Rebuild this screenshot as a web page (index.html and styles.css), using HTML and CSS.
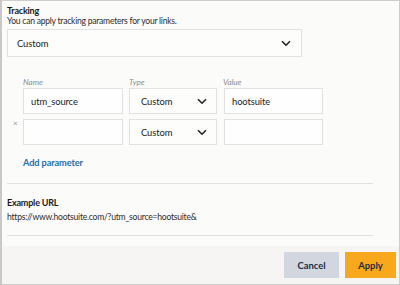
FILE: index.html
```html
<!DOCTYPE html>
<html>

<head>
    <title>Tracking</title>
    <link rel="stylesheet" href="styles.css">
</head>

<body>
    <div class="modal">
        <div class="content">
            <div class="section-title">Tracking</div>
            <div class="section-desc">You can apply tracking parameters for your links.</div>

            <div class="select select-wide">
                <span>Custom</span>
                <svg class="chevron" width="10" height="7" viewBox="0 0 10 7"><path d="M1 1.2 5 5.2l4-4" fill="none" stroke="#222" stroke-width="1.6"/></svg>
            </div>

            <div class="params">
                <div class="param-row param-labels">
                    <div class="remove"></div>
                    <div class="label">Name</div>
                    <div class="label">Type</div>
                    <div class="label">Value</div>
                </div>

                <div class="param-row">
                    <div class="remove"></div>
                    <div class="input">utm_source</div>
                    <div class="select">
                        <span>Custom</span>
                        <svg class="chevron" width="10" height="7" viewBox="0 0 10 7"><path d="M1 1.2 5 5.2l4-4" fill="none" stroke="#222" stroke-width="1.6"/></svg>
                    </div>
                    <div class="input input-value">hootsuite</div>
                </div>

                <div class="param-row">
                    <div class="remove">&times;</div>
                    <div class="input"></div>
                    <div class="select">
                        <span>Custom</span>
                        <svg class="chevron" width="10" height="7" viewBox="0 0 10 7"><path d="M1 1.2 5 5.2l4-4" fill="none" stroke="#222" stroke-width="1.6"/></svg>
                    </div>
                    <div class="input input-value"></div>
                </div>
            </div>

            <div class="add-link">Add parameter</div>

            <hr class="divider">

            <div class="section-title example-title">Example URL</div>
            <div class="example-url">https://www.hootsuite.com/?utm_source=hootsuite&amp;</div>

            <hr class="divider divider-bottom">
        </div>

        <div class="footer">
            <button class="button button-cancel">Cancel</button>
            <button class="button button-apply">Apply</button>
        </div>
    </div>
</body>

</html>
```

FILE: styles.css
```css
body {
    margin: 0;
    font-family: "Lato", "Liberation Sans", sans-serif;
    color: #222;
}

.modal {
    width: 400px;
    height: 285px;
    box-sizing: border-box;
    border: 1px solid #cfcecc;
    border-left: 2px solid #c9c8c6;
    background: #fbfbfa;
    display: flex;
    flex-direction: column;
}

.content {
    padding: 4px 0 0 5px;
    flex: 1;
}

.section-title {
    font-size: 9px;
    line-height: 11px;
    font-weight: bold;
    letter-spacing: -0.2px;
    color: #1a1a1a;
}

.section-desc {
    font-size: 8.6px;
    line-height: 11px;
    letter-spacing: -0.25px;
    color: #2e2e2e;
}

.select {
    display: flex;
    align-items: center;
    justify-content: space-between;
    box-sizing: border-box;
    border: 1px solid #e2e1df;
    background: #fdfdfc;
    font-size: 9.4px;
    letter-spacing: -0.1px;
    padding: 0 9px 0 11px;
}

.select-wide {
    width: 295px;
    height: 28px;
    margin-top: 2px;
    padding-left: 9px;
    padding-right: 10px;
}

.chevron {
    display: block;
}

.params {
    margin-top: 20px;
}

.param-row {
    display: grid;
    grid-template-columns: 10px 100px 88px 100px;
    column-gap: 6px;
    height: 26px;
    margin-top: 5px;
}

.param-labels {
    height: 11px;
    margin-top: 0;
}

.param-labels + .param-row {
    margin-top: 0;
}

.label {
    font-size: 8px;
    line-height: 11px;
    font-style: italic;
    color: #8c8c8a;
}

.input {
    box-sizing: border-box;
    border: 1px solid #e2e1df;
    background: #fefefe;
    font-size: 9.4px;
    letter-spacing: -0.1px;
    display: flex;
    align-items: center;
    padding-left: 7px;
}

.input-value {
    margin-left: 1px;
}

.remove {
    font-size: 8px;
    color: #999;
    padding-left: 6px;
    line-height: 9px;
}

.add-link {
    margin: 12px 0 0 16px;
    font-size: 9.2px;
    line-height: 12px;
    font-weight: bold;
    letter-spacing: -0.1px;
    color: #1f6fa8;
}

.divider {
    width: 366px;
    margin: 14px 0 0 0;
    border: none;
    border-top: 1px solid #e0dfdd;
}

.example-title {
    margin-top: 13px;
}

.example-url {
    margin-top: 3px;
    font-size: 8.6px;
    line-height: 13px;
    letter-spacing: -0.25px;
    color: #2e2e2e;
}

.divider-bottom {
    margin-top: 11px;
}

.footer {
    height: 38px;
    box-sizing: border-box;
    background: #f6f5f3;
    display: flex;
    justify-content: flex-end;
    align-items: center;
    gap: 6px;
    padding: 0 3px 0 0;
}

.button {
    height: 26px;
    border: none;
    font-family: "Lato", "Liberation Sans", sans-serif;
    font-size: 9.4px;
    font-weight: bold;
    color: #1b2a44;
    padding: 0;
    cursor: pointer;
}

.button-cancel {
    background: #d2d7df;
    width: 55px;
}

.button-apply {
    background: #f8a81d;
    width: 51px;
}
```
